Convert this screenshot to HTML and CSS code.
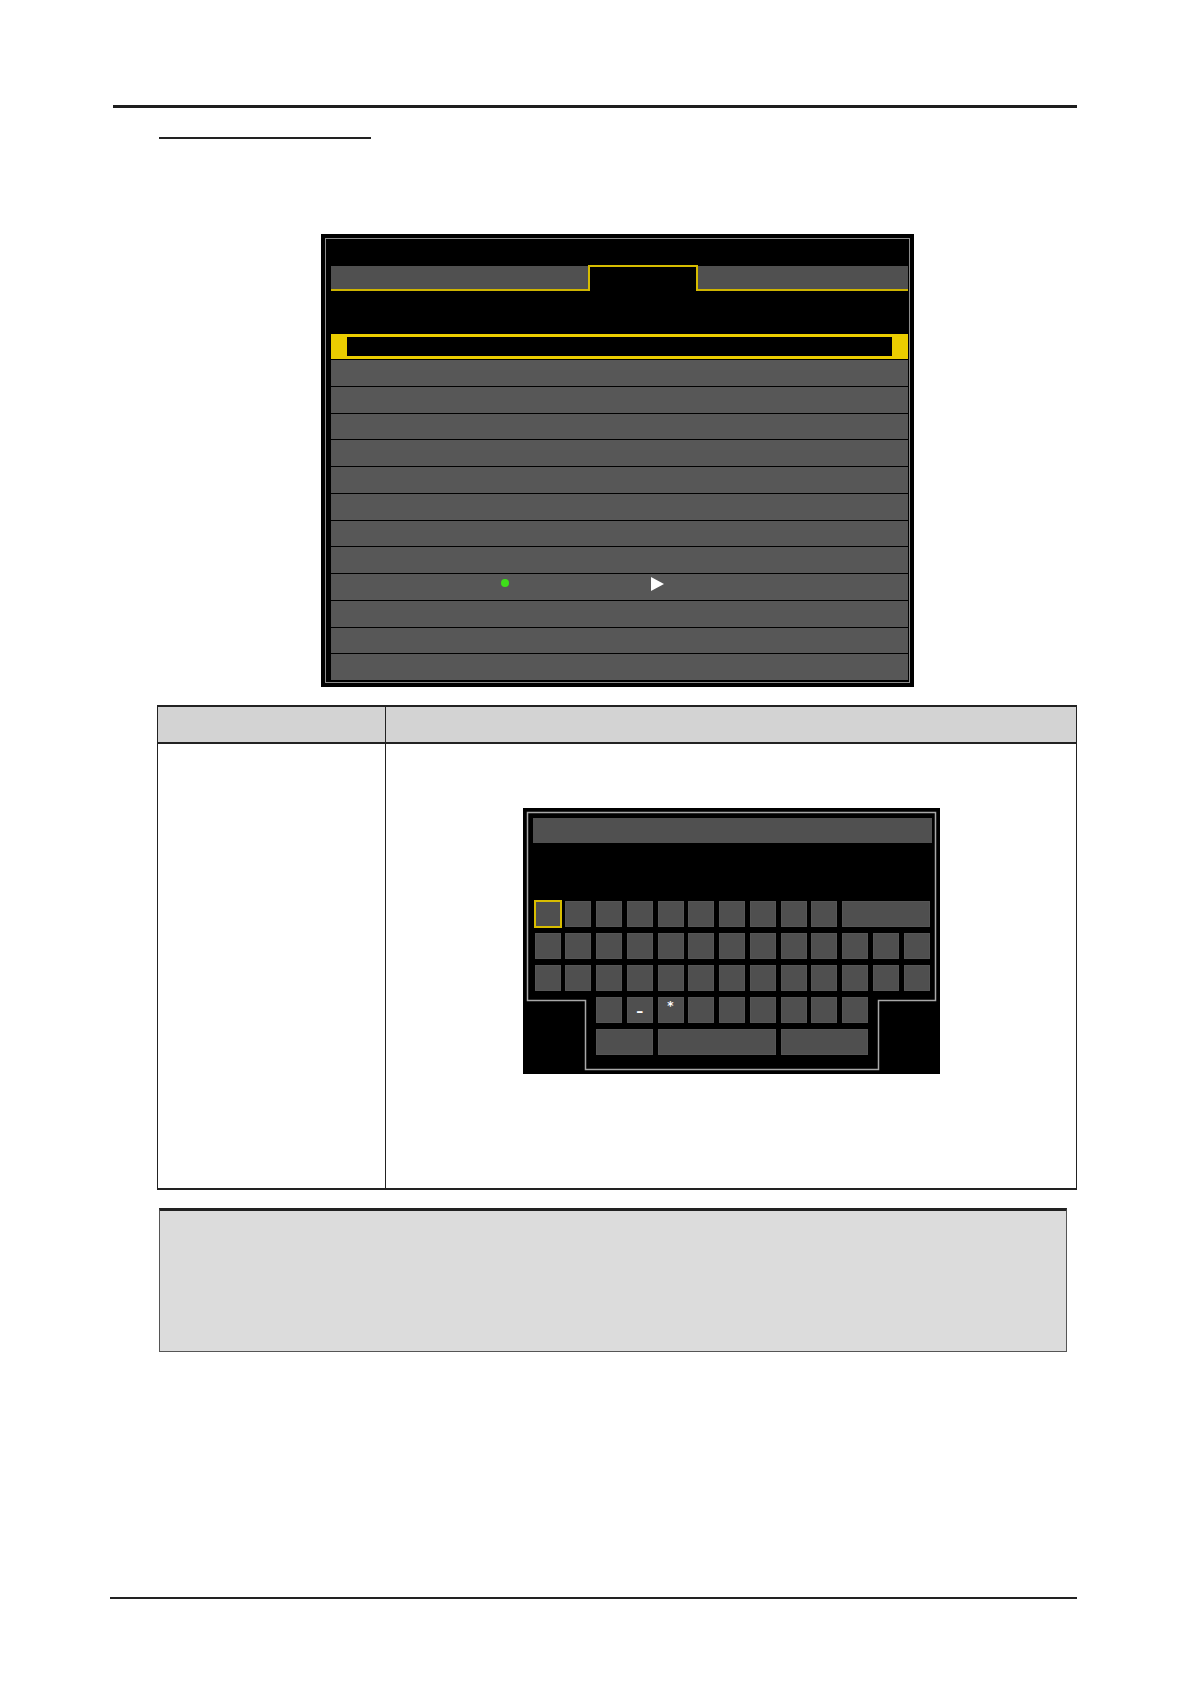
FILE: index.html
```html
<!DOCTYPE html>
<html lang="en">
<head>
<meta charset="utf-8">
<title>Menu screen</title>
<link rel="stylesheet" href="styles.css">
</head>
<body>
<div class="page">
  <div class="rule-top"></div>
  <div class="heading-line"></div>

  <div class="figure">
    <div class="screen">
      <div class="screen-inner">
        <div class="tabs">
          <div class="tab tab-side tab-left"></div>
          <div class="tab tab-active"></div>
          <div class="tab tab-side tab-right"></div>
        </div>
        <div class="sel-row">
          <div class="sel-cap"></div>
          <div class="sel-field"></div>
          <div class="sel-cap"></div>
        </div>
        <div class="rows">
          <div class="row"></div>
          <div class="row"></div>
          <div class="row"></div>
          <div class="row"></div>
          <div class="row"></div>
          <div class="row"></div>
          <div class="row"></div>
          <div class="row"></div>
          <div class="row row-mark"><span class="dot"></span><span class="tri"></span></div>
          <div class="row"></div>
          <div class="row"></div>
          <div class="row"></div>
        </div>
      </div>
    </div>
  </div>

  <div class="spec">
    <div class="spec-head spec-c1"></div>
    <div class="spec-head"></div>
    <div class="spec-body spec-c1"></div>
    <div class="spec-body spec-kbd-cell">
      <div class="kbd">
        <svg class="kbd-outline" width="417" height="266" viewBox="0 0 417 266">
          <polygon points="4.5,4.5 412.5,4.5 412.5,192.5 355.5,192.5 355.5,261.5 62.5,261.5 62.5,192.5 4.5,192.5" fill="none" stroke="#a8a8a8" stroke-width="1.5"/>
        </svg>
        <div class="kbd-title"></div>
        <div class="keys">
          <div class="key key-sel"></div>
          <div class="key"></div><div class="key"></div><div class="key"></div><div class="key"></div>
          <div class="key"></div><div class="key"></div><div class="key"></div><div class="key"></div><div class="key"></div>
          <div class="key span3"></div>

          <div class="key"></div><div class="key"></div><div class="key"></div><div class="key"></div><div class="key"></div>
          <div class="key"></div><div class="key"></div><div class="key"></div><div class="key"></div><div class="key"></div>
          <div class="key"></div><div class="key"></div><div class="key"></div>

          <div class="key"></div><div class="key"></div><div class="key"></div><div class="key"></div><div class="key"></div>
          <div class="key"></div><div class="key"></div><div class="key"></div><div class="key"></div><div class="key"></div>
          <div class="key"></div><div class="key"></div><div class="key"></div>

          <div class="key c3"></div>
          <div class="key key-glyph key-dash">–</div>
          <div class="key key-glyph key-star">*</div>
          <div class="key"></div><div class="key"></div><div class="key"></div><div class="key"></div><div class="key"></div><div class="key"></div>

          <div class="key c3 span2"></div>
          <div class="key span4"></div>
          <div class="key span3"></div>
        </div>
      </div>
    </div>
  </div>

  <div class="note"></div>

  <div class="rule-bottom"></div>
</div>
</body>
</html>
```

FILE: styles.css
```css
html, body {
  margin: 0;
  padding: 0;
  background: #ffffff;
  font-family: "DejaVu Sans", "Liberation Sans", sans-serif;
}

.page {
  margin-left: 110px;
  width: 967px;
  padding-bottom: 60px;
}

.rule-top {
  margin-top: 105px;
  margin-left: 3px;
  height: 3px;
  background: #1e1e1e;
}

.heading-line {
  margin-top: 29px;
  margin-left: 49px;
  width: 212px;
  height: 2px;
  background: #222222;
}

/* ---------- menu screen ---------- */
.figure {
  margin-top: 95px;
  margin-left: 47px;
  width: 920px;
  display: flex;
  justify-content: center;
}

.screen {
  width: 593px;
  height: 453px;
  box-sizing: border-box;
  border: 4px solid #000;
  background: #000;
}

.screen-inner {
  height: 100%;
  box-sizing: border-box;
  border: 1px solid #8c8c8c;
  padding: 26px 1px 2px 5px;
  display: flex;
  flex-direction: column;
}

.tabs {
  display: flex;
  height: 26px;
  flex: none;
}

.tab-side {
  box-sizing: border-box;
  margin-top: 1px;
  height: 25px;
  background: #505050;
  border-bottom: 2px solid #cdb300;
}

.tab-left {
  width: 257px;
}

.tab-right {
  flex: 1;
}

.tab-active {
  width: 110px;
  box-sizing: border-box;
  border: 2px solid #d6bc00;
  border-bottom: none;
  background: #000;
}

.sel-row {
  flex: none;
  margin-top: 43px;
  height: 25px;
  display: flex;
}

.sel-cap {
  width: 16px;
  background: #ebcd00;
}

.sel-field {
  flex: 1;
  background: #000;
  border-top: 3px solid #ebcd00;
  border-bottom: 3px solid #ebcd00;
}

.rows {
  margin-top: 1px;
  flex: 1;
  display: flex;
  flex-direction: column;
  gap: 1px;
}

.row {
  flex: 1;
  background: #575757;
}

.row-mark {
  display: flex;
  align-items: flex-start;
}

.dot {
  width: 8px;
  height: 8px;
  border-radius: 50%;
  background: #3ee01a;
  margin: 5px 0 0 170px;
}

.tri {
  width: 0;
  height: 0;
  border-left: 13px solid #ffffff;
  border-top: 7.5px solid transparent;
  border-bottom: 7.5px solid transparent;
  margin: 3px 0 0 142px;
}

/* ---------- spec table ---------- */
.spec {
  margin-top: 18px;
  margin-left: 47px;
  width: 920px;
  box-sizing: border-box;
  display: grid;
  grid-template-columns: 228px 1fr;
  border-top: 2px solid #222;
  border-bottom: 2px solid #222;
  border-left: 1px solid #222;
  border-right: 1px solid #222;
}

.spec-head {
  height: 35px;
  background: #d3d3d3;
  border-bottom: 2px solid #222;
}

.spec-c1 {
  border-right: 1px solid #222;
}

.spec-body {
  height: 444px;
}

.spec-kbd-cell {
  display: flex;
  justify-content: center;
  align-items: flex-start;
  padding-top: 64px;
  box-sizing: border-box;
}

/* ---------- keyboard ---------- */
.kbd {
  position: relative;
  width: 417px;
  height: 266px;
  box-sizing: border-box;
  padding: 10px 8px 0 10px;
  background: #000;
}

.kbd-outline {
  position: absolute;
  left: 0;
  top: 0;
}

.kbd-title {
  height: 25px;
  background: #505050;
}

.keys {
  display: grid;
  grid-template-columns: repeat(13, 26px);
  grid-auto-rows: 26px;
  column-gap: 4.75px;
  row-gap: 6px;
  margin: 58px 0 0 2px;
}

.key {
  background: #4f4f4f;
  box-shadow: inset 0 0 0 1px #565656;
}

.key-sel {
  width: 28px;
  height: 28px;
  margin: -1px;
  box-sizing: border-box;
  border: 2px solid #d8bd00;
  box-shadow: none;
}

.span2 { grid-column-end: span 2; }
.span3 { grid-column-end: span 3; }
.span4 { grid-column-end: span 4; }
.c3 { grid-column-start: 3; }
.c3.span2 { grid-column: 3 / span 2; }

.key-glyph {
  color: #ffffff;
  font-weight: bold;
  text-align: center;
  font-family: "DejaVu Sans", sans-serif;
}

.key-dash {
  font-size: 14px;
  line-height: 14px;
  padding-top: 7px;
  box-sizing: border-box;
}

.key-star {
  font-size: 12px;
  line-height: 12px;
  padding-top: 3px;
  box-sizing: border-box;
}

/* ---------- note ---------- */
.note {
  margin-top: 18px;
  margin-left: 49px;
  width: 908px;
  height: 144px;
  box-sizing: border-box;
  background: #dcdcdc;
  border: 1px solid #555;
  border-top: 3px solid #222;
}

.rule-bottom {
  margin-top: 245px;
  height: 2px;
  background: #222;
}
```
